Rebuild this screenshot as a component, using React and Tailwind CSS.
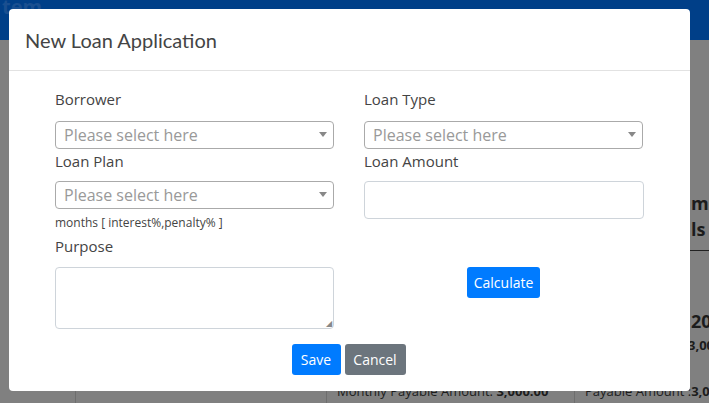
export default function App() {
  const sel = (
    <div className="relative w-[279px] h-[28px] border border-[#aaa] rounded-[4px] bg-white flex items-center pl-[8px] text-[16px] text-[#999]">
      Please select here
      <span className="absolute right-[6px] top-[10px] w-0 h-0 border-l-[4px] border-r-[4px] border-t-[5px] border-l-transparent border-r-transparent border-t-[#888]"></span>
    </div>
  );
  return (
    <div className="relative w-[709px] h-[403px] overflow-hidden bg-[#808080]" style={{ fontFamily: '"Open Sans", sans-serif' }}>
      <div className="h-[40px] bg-[#003f88] text-[#1a4f90] font-bold text-[20px] leading-[14px] pl-[2px]">tem</div>
      <div className="flex h-[363px]">
        <div className="w-[76px] border-r border-[#6e6e6e]"></div>
        <div className="w-[250px]"></div>
        <div className="w-[248px] border-l border-[#6e6e6e] relative text-[#1c1c1c]">
          <div className="absolute left-[10px] top-[345px] text-[13px] leading-none whitespace-nowrap">Monthly Payable Amount: <b>3,000.00</b></div>
        </div>
        <div className="flex-1 border-l border-[#6e6e6e] relative text-[#1c1c1c]">
          <div className="absolute left-[116px] top-[150px] text-[18px] font-bold leading-[26px]">me<br/>ls</div>
          <div className="absolute left-0 right-0 top-[210px] border-t border-[#222]"></div>
          <div className="absolute left-[116px] top-[268px] text-[18px] font-bold">20</div>
          <div className="absolute left-[113px] top-[296px] text-[13px] font-bold">3,00</div>
          <div className="absolute left-[10px] top-[345px] text-[13px] leading-none whitespace-nowrap">Payable Amount :<b>3,0</b></div>
        </div>
      </div>
      <div className="absolute left-[9px] top-[9px] w-[681px] h-[382px] bg-white rounded-[4px] flex flex-col">
        <div className="h-[62px] border-b border-[#e2e2e2] flex items-center pl-[16px] text-[20px] text-[#444]" style={{ fontFamily: 'Lato, sans-serif' }}>New Loan Application</div>
        <div className="flex gap-[30px] pl-[46px] pt-[17px] text-[15px] text-[#444]">
          <div className="flex flex-col">
            <div className="h-[33px]">Borrower</div>
            {sel}
            <div className="h-[32px] pt-[1px]">Loan Plan</div>
            {sel}
            <div className="text-[12px] mt-[5px] h-[16px]">months [ interest%,penalty% ]</div>
            <div className="h-[37px] pt-[5px]">Purpose</div>
            <div className="relative w-[279px] h-[62px] border border-[#ced4da] rounded-[4px]">
              <span className="absolute right-[1px] bottom-[1px] text-[8px] text-[#888] leading-none">◢</span>
            </div>
          </div>
          <div className="flex flex-col">
            <div className="h-[33px]">Loan Type</div>
            {sel}
            <div className="h-[32px] pt-[1px]">Loan Amount</div>
            <div className="w-[280px] h-[38px] border border-[#ced4da] rounded-[4px]"></div>
            <div className="mt-[48px] ml-[103px] w-[73px] h-[31px] bg-[#007bff] rounded-[3px] text-white text-[14px] flex items-center justify-center">Calculate</div>
          </div>
        </div>
        <div className="flex justify-center gap-[4px] mt-[15px] pr-[2px] text-[14px] text-white">
          <div className="w-[49px] h-[31px] bg-[#007bff] rounded-[3px] flex items-center justify-center">Save</div>
          <div className="w-[61px] h-[31px] bg-[#6c757d] rounded-[3px] flex items-center justify-center">Cancel</div>
        </div>
      </div>
    </div>
  );
}
